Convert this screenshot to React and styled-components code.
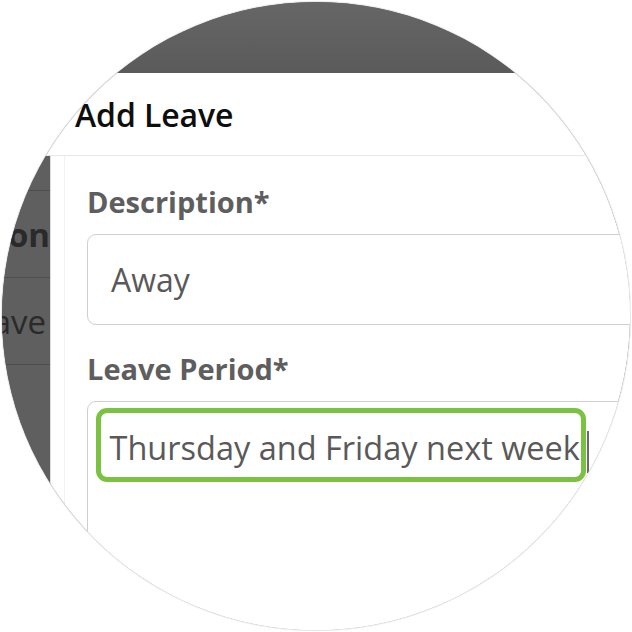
import React from "react";
import styled, { createGlobalStyle } from "styled-components";

const Global = createGlobalStyle`
  html, body { margin: 0; padding: 0; background: #ffffff; }
  body { font-family: "Open Sans", "Noto Sans", sans-serif; }
  * { box-sizing: border-box; }
`;

const Page = styled.div`
  width: 632px;
  height: 632px;
  padding: 2px;
  background: #ffffff;
`;

const Lens = styled.div`
  width: 628px;
  height: 628px;
  border-radius: 50%;
  overflow: hidden;
  background: #5f5f5f;
  box-shadow: 0 0 0 1px #e7e7e7, 0 0 3px rgba(0, 0, 0, 0.06);
  display: flex;
  flex-direction: column;
`;

const TopBand = styled.div`
  height: 71px;
  flex: none;
  background: linear-gradient(#666666, #5e5e5e 70%, #5a5a5a);
`;

const Header = styled.div`
  height: 83px;
  flex: none;
  background: #ffffff;
  border-bottom: 1px solid #e8e8e8;
  display: flex;
  align-items: center;
  padding-left: 73px;
`;

const Title = styled.h1`
  margin: 0;
  font-family: "Open Sans", sans-serif;
  font-weight: 600;
  font-size: 32px;
  color: #0e0e0e;
  letter-spacing: -0.1px;
`;

const BodyRow = styled.div`
  flex: 1;
  display: flex;
  min-height: 0;
`;

const Backdrop = styled.div`
  width: 48px;
  flex: none;
  background: #5f5f5f;
  padding-top: 34px;
  overflow: hidden;
`;

const BackRow = styled.div`
  height: 87px;
  border-top: 1px solid #4e4e4e;
  display: flex;
  align-items: center;
  justify-content: flex-end;
  padding-right: ${(p) => p.$pad}px;
  white-space: nowrap;
  font-family: "Open Sans", sans-serif;
  font-size: 33px;
  font-weight: ${(p) => (p.$bold ? 700 : 400)};
  color: #2a2a2a;
`;

const Panel = styled.div`
  flex: 1;
  background: linear-gradient(to right, #ffffff 0, #ffffff 13px, #f2f2f2 13px, #f2f2f2 14px, #ffffff 14px);
  border-left: 1px solid #dcdcdc;
  padding: 26px 0 0 36px;
  overflow: hidden;
  display: flex;
  flex-direction: column;
`;

const Label = styled.div`
  font-family: "Open Sans", sans-serif;
  font-weight: 700;
  font-size: 29px;
  line-height: 40px;
  color: #5e5e5e;
  margin-bottom: 12px;
  white-space: nowrap;
`;

const Input = styled.div`
  width: 620px;
  height: 91px;
  flex: none;
  border: 1.5px solid #cfcfcf;
  border-radius: 9px;
  background: #ffffff;
  display: flex;
  align-items: center;
  padding-left: 23px;
  margin-bottom: 24px;
  font-family: "Open Sans", sans-serif;
  font-size: 32px;
  color: #595959;
`;

const TextArea = styled.div`
  width: 620px;
  height: 260px;
  flex: none;
  border: 1.5px solid #cfcfcf;
  border-radius: 9px;
  background: #ffffff;
  padding: 6px 0 0 7.5px;
`;

const EntryLine = styled.div`
  display: flex;
  align-items: center;
`;

const Highlight = styled.div`
  width: 490px;
  height: 74px;
  border: 5px solid #7cc242;
  border-radius: 11px;
  display: flex;
  align-items: center;
  padding: 5px 0 0 9px;
  font-family: "Open Sans", sans-serif;
  font-size: 32.5px;
  color: #595959;
  white-space: nowrap;
`;

const Caret = styled.span`
  display: block;
  width: 2px;
  height: 42px;
  margin-left: 1px;
  margin-top: 14px;
  background: #6a6a6a;
`;

export default function App() {
  return (
    <>
      <Global />
      <Page>
        <Lens>
          <TopBand />
          <Header>
            <Title>Add Leave</Title>
          </Header>
          <BodyRow>
            <Backdrop>
              <BackRow $bold $pad={0}>
                <span>Description</span>
              </BackRow>
              <BackRow $pad={4}>Leave</BackRow>
              <BackRow $pad={4} />
            </Backdrop>
            <Panel>
              <Label>Description*</Label>
              <Input>Away</Input>
              <Label>Leave Period*</Label>
              <TextArea>
                <EntryLine>
                  <Highlight>Thursday and Friday next week</Highlight>
                  <Caret />
                </EntryLine>
              </TextArea>
            </Panel>
          </BodyRow>
        </Lens>
      </Page>
    </>
  );
}
